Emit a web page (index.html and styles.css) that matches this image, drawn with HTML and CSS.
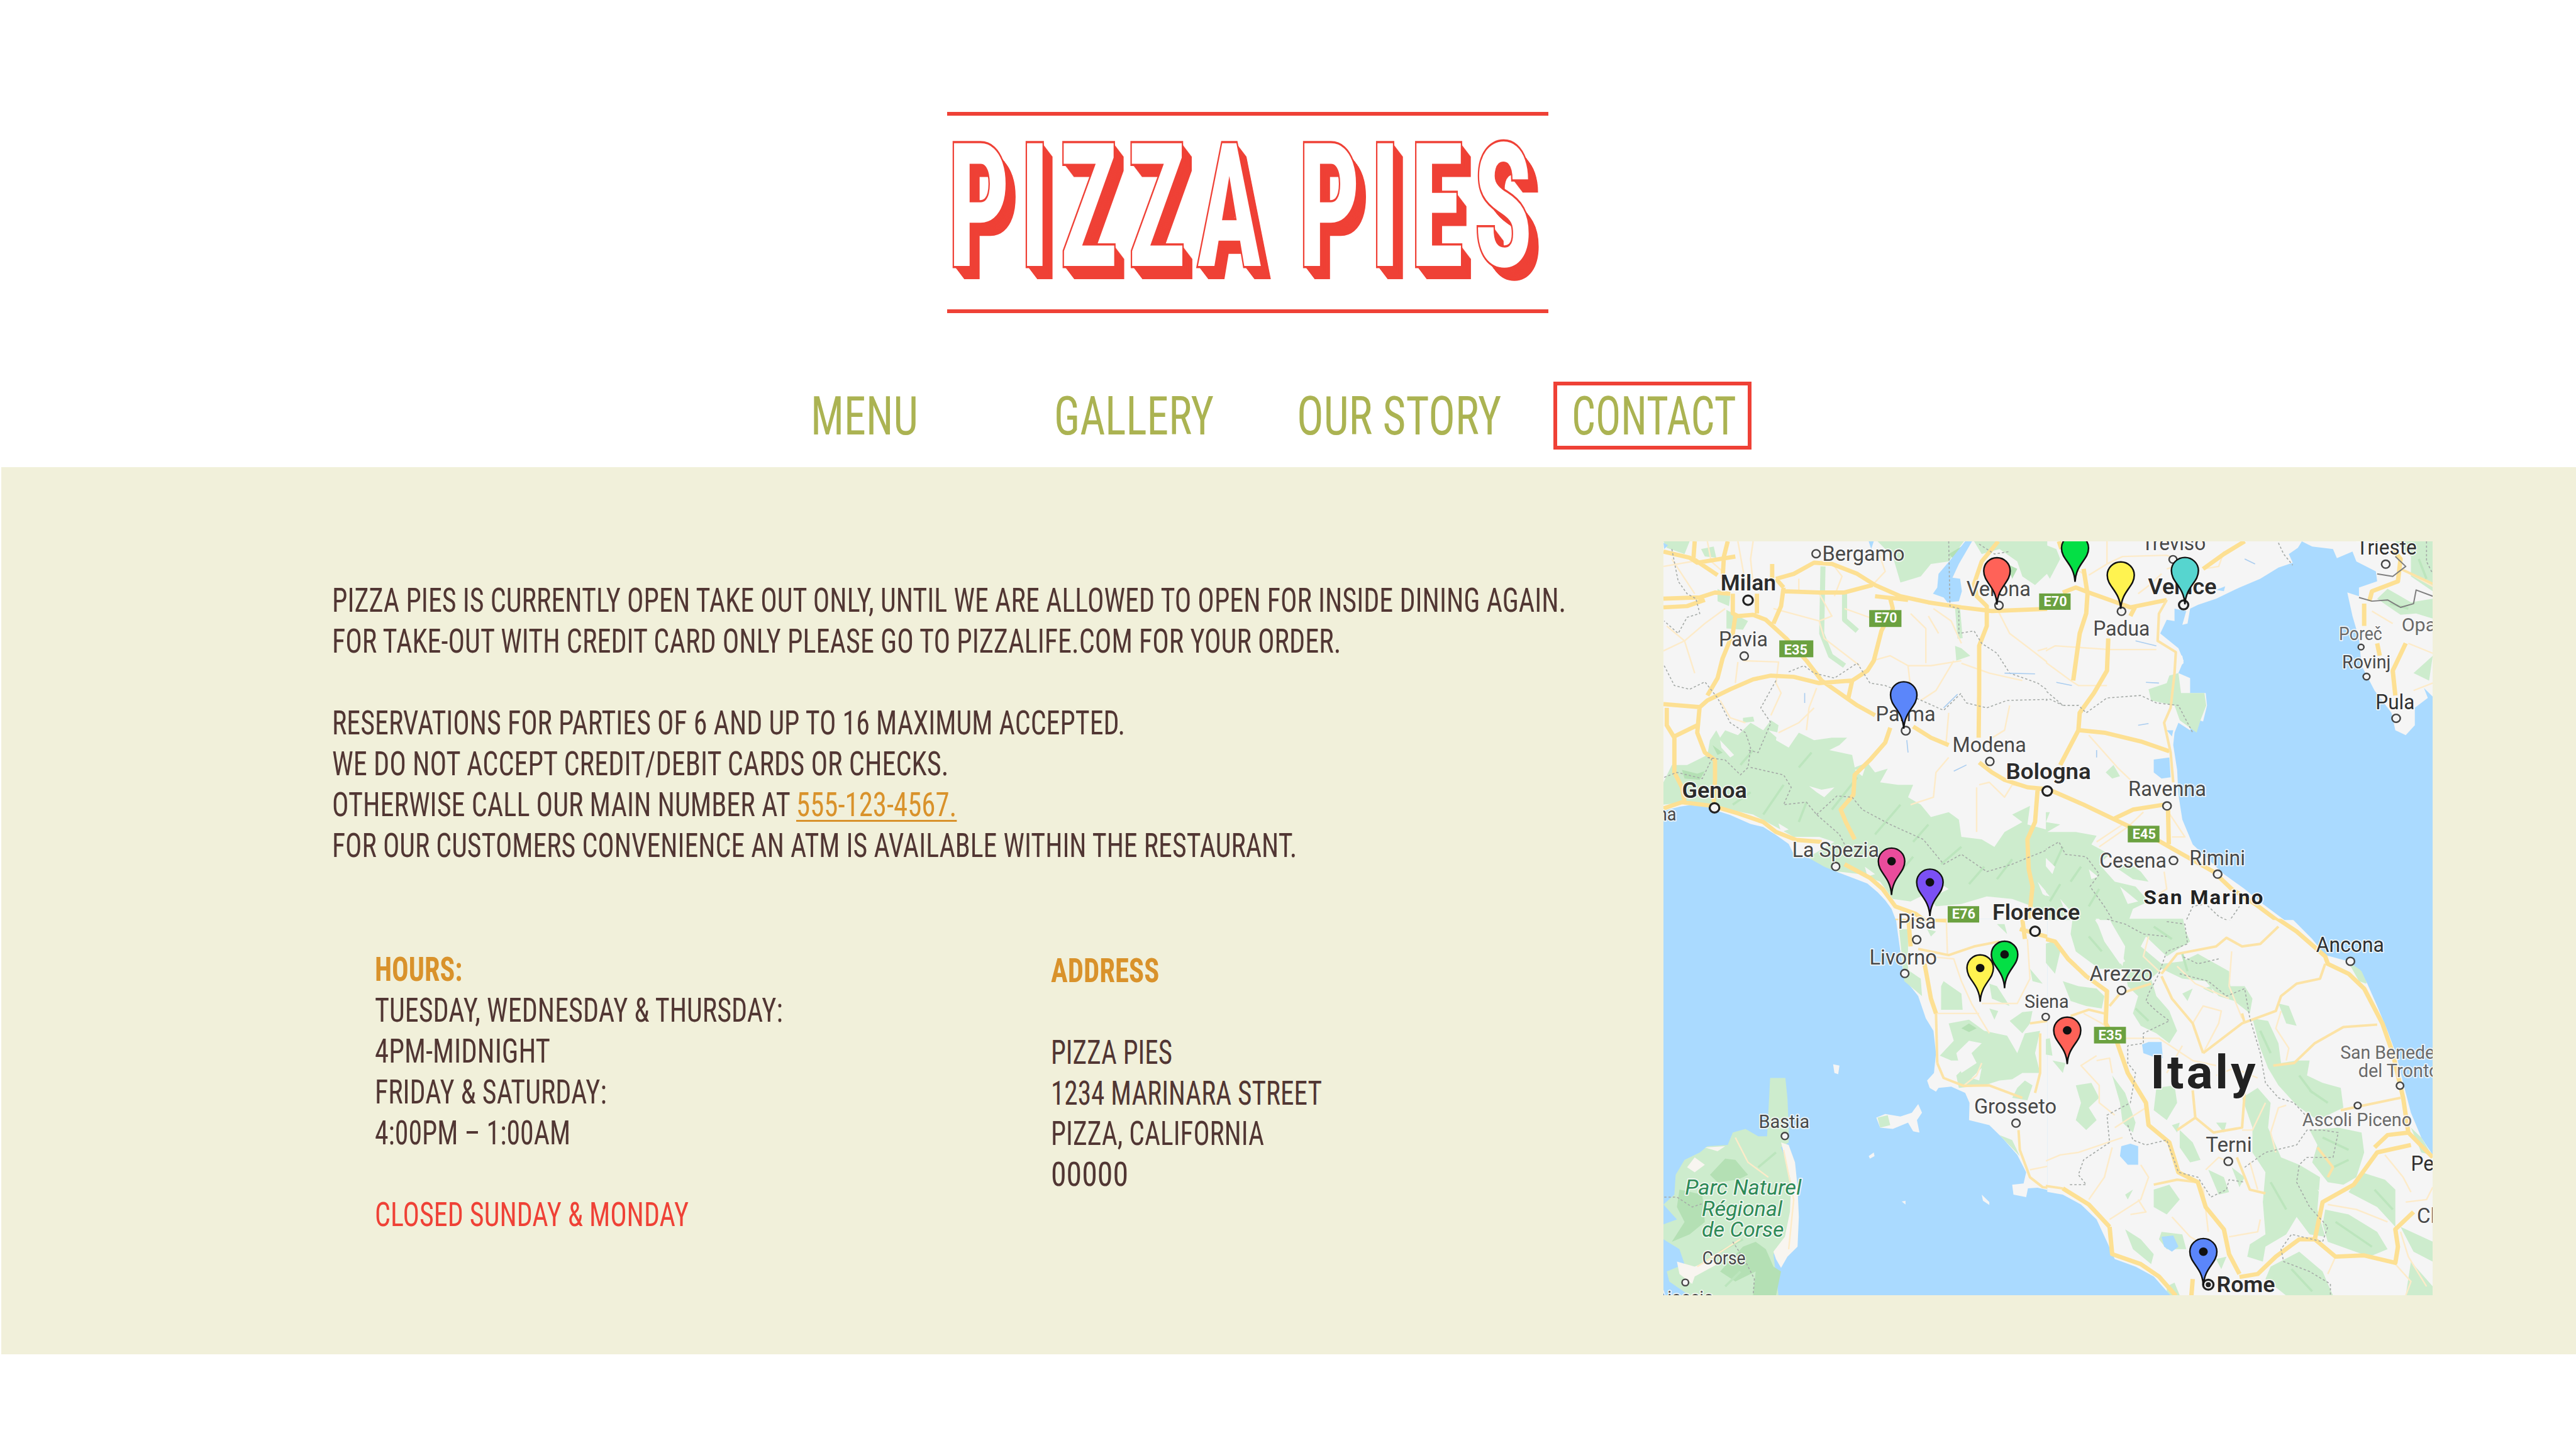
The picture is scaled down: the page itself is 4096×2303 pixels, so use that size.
FILE: index.html
```
<!DOCTYPE html>
<html lang="en">
<head>
    <meta charset="UTF-8">
    <meta name="viewport" content="width=device-width, initial-scale=1.0">
    <title>Pizza Pies - Contact</title>
    <link rel="stylesheet" href="styles.css">
</head>
<body>
    <header>
        <div class="logo"><h1 class="fit" data-width="947">PIZZA PIES</h1></div>
        <nav>
            <a href="#"><span class="fit" data-width="171">MENU</span></a>
            <a href="#"><span class="fit" data-width="254">GALLERY</span></a>
            <a href="#"><span class="fit" data-width="325">OUR STORY</span></a>
            <a href="#" class="active"><span class="fit" data-width="262">CONTACT</span></a>
        </nav>
    </header>

    <main class="contact">
        <div class="info">
            <div class="notice">
                <p><span class="fit" data-width="1962">PIZZA PIES IS CURRENTLY OPEN TAKE OUT ONLY, UNTIL WE ARE ALLOWED TO OPEN FOR INSIDE DINING AGAIN.</span></p>
                <p><span class="fit" data-width="1604">FOR TAKE-OUT WITH CREDIT CARD ONLY PLEASE GO TO PIZZALIFE.COM FOR YOUR ORDER.</span></p>
                <br>
                <p><span class="fit" data-width="1261">RESERVATIONS FOR PARTIES OF 6 AND UP TO 16 MAXIMUM ACCEPTED.</span></p>
                <p><span class="fit" data-width="980">WE DO NOT ACCEPT CREDIT/DEBIT CARDS OR CHECKS.</span></p>
                <p class="phone"><span class="fit" data-width="729">OTHERWISE CALL OUR MAIN NUMBER AT</span><a href="#" class="fit" data-width="255">555-123-4567.</a></p>
                <p><span class="fit" data-width="1534">FOR OUR CUSTOMERS CONVENIENCE AN ATM IS AVAILABLE WITHIN THE RESTAURANT.</span></p>
            </div>
            <div class="details">
                <div class="hours">
                    <h2><span class="fit" data-width="139">HOURS:</span></h2>
                    <p><span class="fit" data-width="649">TUESDAY, WEDNESDAY &amp; THURSDAY:</span></p>
                    <p><span class="fit" data-width="279">4PM-MIDNIGHT</span></p>
                    <p><span class="fit" data-width="369">FRIDAY &amp; SATURDAY:</span></p>
                    <p><span class="fit" data-width="311">4:00PM – 1:00AM</span></p>
                    <br>
                    <p class="closed"><span class="fit" data-width="499">CLOSED SUNDAY &amp; MONDAY</span></p>
                </div>
                <div class="address">
                    <h2><span class="fit" data-width="172">ADDRESS</span></h2>
                    <br>
                    <p><span class="fit" data-width="193">PIZZA PIES</span></p>
                    <p><span class="fit" data-width="431">1234 MARINARA STREET</span></p>
                    <p><span class="fit" data-width="339">PIZZA, CALIFORNIA</span></p>
                    <p><span class="fit" data-width="123">00000</span></p>
                </div>
            </div>
        </div>

        <svg class="map" viewBox="0 0 1700 1667" preserveAspectRatio="none">
            <defs>
                <clipPath id="nw"><rect width="848" height="837"/></clipPath>
                <clipPath id="ne"><rect x="845" width="855" height="837"/></clipPath>
                <clipPath id="sw"><rect y="834" width="848" height="833"/></clipPath>
                <clipPath id="se"><rect x="845" y="834" width="855" height="833"/></clipPath>
                <path id="pin" d="M0,136 C-4,62 -52,48 -52,0 A52,53 0 1 1 52,0 C52,48 4,62 0,136Z"/>
                <g id="dot"><circle r="14" fill="#111"/></g>
            </defs>
            <rect width="1700" height="1667" fill="#f5f5f5"/>

            <!-- north west -->
            <g clip-path="url(#nw)"><g transform="matrix(.5612 0 0 .5485 -15.15 -15.9)">
                <g class="green">
                    <path d="M27,1000 60,930 120,930 200,890 210,830 235,790 250,820 270,790 320,810 370,760 420,790 450,750 480,770 470,830 520,860 560,800 620,830 690,820 750,820 720,850 680,870 770,890 780,940 830,920 860,960 910,945 880,1000 950,1010 1010,1010 990,1060 1040,1090 1080,1140 1150,1120 1190,1150 1200,1220 1280,1230 1330,1260 1370,1200 1440,1160 1400,1130 1470,1095 1460,1170 1568,1200 1568,1568 1480,1500 1400,1470 1300,1460 1200,1490 1100,1500 1060,1450 1000,1480 930,1470 880,1400 800,1370 640,1350 600,1300 700,1240 640,1220 540,1220 470,1180 380,1130 240,1100 120,1080 27,1090Z"/>
                    <path d="M870,29 930,90 960,195 1040,170 1080,120 1150,110 1210,29ZM1250,29 1280,80 1350,60 1420,110 1440,170 1490,205 1568,130 1568,29ZM27,29 130,29 110,80 40,55Z"/>
                    <path d="M240,220 290,250 285,290 240,270ZM275,305 320,330 360,350 340,385 275,380ZM340,740 380,735 385,755 340,760ZM1175,450 1200,460 1235,490 1180,510ZM175,60 225,50 235,95 190,90Z"/>
                    <path class="river" d="M655,130 650,400 685,490 740,530M740,240 740,345 790,390M1185,300 1195,420"/>
                </g>
                <g class="shade">
                    <path d="M100,950 160,965 190,955 170,990 110,985ZM1150,80 1200,50 1180,110ZM1380,120 1420,140 1400,180ZM220,850 260,880 240,890Z"/>
                    <path class="ridge" d="M300,1090 370,1040M420,1130 500,1010M560,1160 590,1080M690,1110 790,980M860,1210 960,1090M1010,1240 1070,1170M1120,1330 1200,1260M1230,1410 1290,1340M1340,1390 1400,1310M960,1360 1010,1300M560,940 610,880M330,930 380,870"/>
                </g>
                <path fill="#f5f5f5" d="M250,830 305,890 290,900 255,860ZM600,1015 650,1030 700,1020 660,1060 630,1040ZM440,790 480,800 490,835ZM780,950 820,945 810,975ZM1120,1410 1150,1430 1110,1450ZM480,1165 520,1190 490,1200ZM820,1340 860,1370 830,1380ZM1500,1400 1568,1480 1520,1450Z"/>
                <g class="water">
                    <path d="M27,1115 90,1098 130,1092 200,1098 230,1112 290,1132 370,1168 420,1180 470,1212 520,1248 540,1290 600,1305 660,1340 720,1365 780,1388 830,1408 870,1443 900,1475 925,1510 940,1550 945,1568 27,1568Z"/>
                    <path d="M1215,29 1160,100 1110,160 1105,215 1088,240 1130,255 1145,275 1190,270 1202,230 1195,180 1165,175 1190,120 1242,29ZM835,29 855,29 845,60ZM27,35 45,45 30,60Z"/>
                </g>
                <g class="minor">
                    <path d="M27,130 140,110 M200,29 215,110 260,150M320,29 350,200M380,29 370,100 380,200M60,100 150,240 M27,470 110,430 190,360 270,300M110,430 150,560M110,430 40,370M340,510 480,515 470,600 490,640 450,730M320,515 310,600M640,240 690,330 640,350 460,300M640,350 660,420 800,530M850,510 920,490 990,530 1080,530 1200,510M1000,320 1060,380 1060,520M1200,440 1160,350 1090,300M1345,310 1390,400 1480,470 1568,540M1500,470 1568,450M990,530 1000,620M1170,510 1100,630 1040,670M630,620 600,700 590,790M620,700 560,760 480,800M1150,720 1140,840M1390,690 1370,790 1290,840M250,670 290,740 350,760M1150,900 1100,960 1090,1060 1000,1090M1270,1010 1310,1000 1370,1060 1400,1010 1450,1020M1260,1020 1260,1200M700,250 730,170 700,130M560,230 560,180M850,205 900,150 870,60M1110,400 1070,330M740,300 850,340M1200,520 1310,560 1440,590"/>
                </g>
                <g class="major">
                    <path d="M27,260 170,255 230,235 290,240M150,29 145,100 240,165M280,29 265,90 260,180M27,70 130,95 160,115 310,90M470,180 540,160 620,115 690,120 790,160 860,205 960,250 1070,275 1200,295 1320,310 1568,300M500,230 640,235 740,235 850,205M500,215 490,290 460,360M470,180 500,215M300,240 300,320 320,330 380,325 430,345 510,420 590,510 650,590 720,640 790,690 860,730M395,240 395,320M920,260 930,300 885,390 855,510 830,550 770,590 640,600 540,575 450,570 380,585 290,625 200,670 170,697 27,685M770,590 755,660M310,330 300,400 260,500 240,580 200,650M170,690 160,800 190,880 230,910 230,990 225,1080M40,700 40,770 70,820 70,960 100,1020 110,1080M70,815 160,770M27,1105 100,1080 220,1095 320,1125 420,1160 470,1200 550,1232 650,1240M1010,775 1080,820 1150,850M920,780 900,840 840,910 780,970 775,1050 725,1110 745,1160 780,1230M1270,920 1320,960 1370,990 1460,1020 1568,1030M1345,29 1280,110 1250,200 1260,250 1300,290 1300,370 1270,450 1270,640 1268,820M740,1330 840,1385 890,1430 940,1500 1020,1530 1070,1568M1500,1030 1490,1160 1460,1230 1465,1350 1480,1420 1465,1568M860,250 990,265M455,120 455,180M27,295 120,290 190,265"/>
                </g>
                <path class="border" d="M60,60 85,190 120,240 155,260 170,320 120,335 85,400 30,350M30,530 70,610 130,625 190,595 240,660 290,760 350,800 370,860 360,940 330,970 270,910 200,900M470,590 410,700 450,760 400,880 360,870M370,940 500,970 530,1020 500,1090 590,1080 630,1130 720,1210 740,1250M630,1130 710,1055 770,1060 810,1110 920,1170 1050,1230 1130,1330 1200,1290 1300,1360 1400,1330 1470,1300 1568,1260M520,555 580,530 620,560 700,580 790,520 840,600 900,610 1020,660 1130,710 1200,640M1150,29 1155,290 1190,300 1190,400 1250,390 1280,440 1340,480 1390,560 1500,600 1568,650M1200,650 1220,680 1300,700 1380,670 1568,665M1270,40 1330,80 1390,70M30,980 80,960 180,985 220,900"/>
                <path class="stream" d="M1370,560 1490,563M1130,700 1185,645M583,640 583,680M985,830 990,880M1170,955 1220,930"/>
            </g></g>

            <!-- north east -->
            <g clip-path="url(#ne)"><g transform="matrix(.574 0 0 .5485 825 -15.9)">
                <g class="green">
                    <path d="M0,29 75,60 90,100 50,180 0,90ZM1380,29 1524,29 1524,230 1440,170 1440,90ZM1350,220 1440,275 1524,260 1524,340 1460,320 1400,325 1310,260ZM1450,560 1524,490 1510,590ZM265,960 295,930 320,975 290,985Z"/>
                    <path d="M0,1120 50,1120 35,1160 90,1170 40,1200 150,1200 230,1215 210,1250 280,1290 240,1330 300,1400 380,1420 430,1480 370,1510 350,1568 0,1568ZM300,1340 360,1330 400,1360 430,1400 370,1390Z"/>
                </g>
                <path class="shade ridge" d="M60,1350 100,1260M130,1400 170,1340M200,1500 240,1430M50,1480 90,1410M1470,100 1500,180M1360,280 1430,300"/>
                <path fill="#f5f5f5" d="M20,1290 70,1340 60,1370 20,1320ZM90,1470 140,1530 120,1550ZM0,1400 50,1460 10,1450ZM320,1420 390,1480 350,1490ZM200,1350 235,1380 210,1390Z"/>
                <g class="water">
                    <path d="M1020,29 1005,55 970,80 985,115 930,135 860,180 780,215 690,260 620,285 590,300 580,360 560,365 575,310 530,300 530,350 500,345 475,400 510,430 545,460 565,510 545,560 590,580 590,640 650,640 655,690 640,755 625,750 625,710 605,720 590,790 545,760 530,800 525,850 540,950 545,1050 560,1150 600,1250 650,1300 720,1370 800,1430 870,1490 970,1568 1568,1568 1568,655 1524,655 1490,620 1505,660 1455,700 1455,770 1420,810 1380,790 1365,720 1300,630 1250,530 1240,420 1215,330 1195,235 1240,250 1240,215 1310,190 1305,150 1230,110 1215,70 1155,97 1140,60 1060,50Z"/>
                    <path d="M450,908 510,900 515,980 480,985 450,960ZM500,790 525,790 520,815ZM690,225 725,210 720,230Z"/>
                </g>
                <path class="green" d="M430,625 500,600 510,570 545,560 555,640 645,640 652,690 630,750 615,800 550,750 530,690 440,670Z"/>
                <path fill="#f5f5f5" d="M535,480 560,490 565,520 540,540Z"/>
                <path class="minor" d="M0,490 70,450 280,465 460,465M0,490 130,590 160,610 270,610M200,165 270,120 330,90 500,85 530,100M270,29 270,120M390,240 440,200 480,160M200,810 310,940 360,990M500,1110 570,1220 520,1220M410,1120 350,1180 240,1260M490,1360 500,1430 420,1480M640,140 700,130 720,70M1290,310 1370,360M1420,150 1524,210M1524,600 1450,630M1430,440 1524,480M330,1170 230,1240M100,29 120,120 180,160M500,140 560,120"/>
                <path class="major" d="M180,140 195,240 190,320 165,400 140,590M100,235 150,215 200,235 280,265 360,295 500,265M275,420 270,550 220,640 165,720 160,790 120,870 90,930M165,790 260,800 400,835 510,875M0,1010 60,1035 180,1090 300,1150 460,1230 560,1290 680,1360 750,1430 840,1490 940,1568M300,1145 370,1110 490,1090M505,1110 508,1250M640,140 720,80 800,29M1280,270 1290,230 1390,190 1400,100 1370,60M1260,280 1260,370M1310,440 1320,490M1420,440 1370,550 1380,650M0,1170 5,1040M85,29 95,60M380,290 360,330"/>
                <path class="road-thin" d="M500,265 470,320 465,430 535,475 530,560 515,700 490,760 515,880 525,1000M1400,140 1524,200"/>
                <path class="frontier" d="M1240,255 1290,270 1350,265 1400,295 1450,280 1460,225 1524,250M1310,160 1370,170 1420,130 1380,90"/>
                <path class="border" d="M0,600 100,690 160,690 190,720 270,660 400,650 460,680 545,690 600,800M0,680 50,665 100,690M0,1290 85,1240 110,1290 190,1300 240,1370 205,1420 260,1500 300,1568M930,35 950,80 985,125M1500,29 1500,110 1524,160M570,1568 600,1500 650,1490 700,1540 740,1560 780,1500"/>
                <path class="stream" d="M420,597 470,600M75,597 135,610M390,770 430,763M230,870 230,900M380,430 460,450M800,100 840,120"/>
            </g></g>

            <!-- south west -->
            <g clip-path="url(#sw)"><g transform="matrix(.5612 0 0 .5485 -15.15 824)">
                <rect class="water" width="1568" height="1568"/>
                <path fill="#f5f5f5" d="M940,0 950,80 975,260 1030,330 1060,420 1090,470 1100,560 1092,640 1065,670 1075,700 1100,715 1110,700 1160,695 1215,720 1232,760 1230,830 1310,850 1360,900 1420,970 1455,1040 1445,1085 1400,1090 1405,1130 1455,1140 1462,1105 1500,1102 1568,1118 1568,0ZM695,605 720,610 715,645 700,640ZM835,975 855,960 858,975 840,985ZM1280,1130 1310,1160 1310,1172 1285,1155ZM965,1158 980,1155 980,1170ZM865,820 900,805 960,815 1005,800 1030,765 1045,800 1025,830 1035,880 1010,875 990,840 930,865 880,860Z"/>
                <path class="green" d="M447,660 507,660 515,740 520,850 520,920 490,940 530,1050 540,1150 520,1260 500,1330 460,1370 480,1537 130,1537 50,1480 40,1440 110,1410 90,1350 27,1310 27,1250 80,1230 27,1170 70,1130 75,1050 110,990 170,960 200,935 280,930 300,880 350,865 400,895 435,895 440,800Z"/>
                <path fill="#f8f5f0" d="M490,920 520,930 545,1000 555,1100 560,1220 555,1340 515,1380 490,1425 470,1390 460,1360 505,1300 525,1200 530,1080ZM150,980 190,1010 150,1040 120,1020ZM80,1400 150,1420 220,1390 240,1410 150,1460 140,1490 90,1450ZM190,940 270,935 240,955Z"/>
                <g class="green">
                    <path d="M955,60 990,60 990,225 1040,260 1045,330 975,270ZM1130,270 1200,320 1205,385 1120,385 1120,290ZM1150,440 1230,425 1290,470 1380,490 1420,560 1450,480 1510,470 1490,560 1510,640 1440,640 1400,665 1350,670 1290,690 1190,700 1180,650 1240,590 1160,590 1115,570 1170,510ZM1400,740 1420,700 1450,670 1480,690 1460,750ZM1390,430 1440,395 1480,390 1470,440 1440,480ZM1310,380 1345,390 1330,425ZM1540,200 1568,120 1568,280ZM1310,280 1340,290 1390,370 1320,340ZM1350,890 1400,910 1430,975ZM870,820 910,810 920,850 880,860ZM1065,60 1100,70 1080,90ZM1340,40 1370,40 1380,80ZM1470,220 1520,280 1480,270Z"/>
                </g>
                <path fill="#f5f5f5" d="M1180,560 1230,510 1280,520 1240,560 1260,600 1200,640ZM1240,660 1280,620 1270,670Z"/>
                <g class="shade">
                    <path d="M210,1050 270,985 310,990 360,1050 320,1070 240,1080ZM340,1340 390,1320 430,1350 460,1420 490,1440 470,1537 380,1537 390,1440 310,1480 250,1440ZM90,1110 180,1130 190,1240 130,1290 60,1320 110,1240 80,1180ZM1200,460 1230,440 1260,460 1230,475Z"/>
                </g>
                <path class="shade ridge" d="M400,1020 470,960M250,1360 340,1310M270,1500 330,1440"/>
                <path class="minor" d="M1060,170 1170,180 1200,270 1240,360 1280,430 1310,480M1140,0 1145,160M1100,400 1270,400M1280,360 1420,360 1470,260 1460,100M1210,690 1260,650 1280,600M1470,1030 1568,1010M310,900 360,1000 440,1060M500,950 540,1150 520,1350M330,1310 160,1420"/>
                <path class="road-thin" d="M1030,140 1150,165 1250,130 1350,110M1105,600 1130,660 1210,692 1310,690 1440,740M1510,480 1510,640 1490,720M1425,870 1430,950 1470,1060 1520,1100 1568,1105M1470,440 1540,430"/>
                <path class="major" d="M1055,200 1080,340 1100,400M990,0 1000,130M1430,60 1568,100M1440,20 1450,100M940,15 1140,25"/>
                <path class="road-thin" d="M1100,400 1105,600"/>
                <path class="border" d="M30,1140 80,1140 140,1180 200,1160M300,1320 350,1400 385,1470 380,1537"/>
            </g></g>

            <!-- south east -->
            <g clip-path="url(#se)"><g transform="matrix(.574 0 0 .5485 825 824)">
                <g class="green">
                    <path d="M140,0 210,0 240,50 300,160 330,210 340,130 290,40 270,0 560,0 570,60 590,110 500,170 440,110 420,90 400,130 480,200 560,190 620,160 740,230 745,290 800,290 830,340 820,400 760,350 700,330 650,270 560,260 480,220 440,260 460,330 510,390 540,470 510,520 460,480 400,450 370,400 390,330 350,290 340,220 240,220 150,150 130,80ZM0,130 60,110 90,150 70,240 30,190ZM100,270 160,290 230,300 260,330 250,380 190,370 130,350ZM830,420 890,430 930,520 940,600 1000,590 1050,590 1040,650 1100,680 1170,700 1180,780 1080,830 1000,770 930,690 890,620 860,540ZM930,360 970,370 1000,450 960,440Z"/>
                    <path d="M150,690 210,680 240,740 200,780 230,830 190,870 150,830 170,760ZM290,650 340,720 380,840 370,880 330,840 320,760ZM460,700 530,690 540,760 500,830 450,790ZM550,870 600,920 630,990 590,1000 550,940ZM790,740 850,700 900,760 890,860 940,980 1010,1010 1090,1060 1080,1190 1110,1300 1050,1290 1000,1220 960,1290 880,1340 870,1400 810,1380 820,1330 880,1290 870,1160 880,1040 830,960 830,860ZM1050,870 1160,860 1250,880 1260,960 1230,1060 1180,1090 1120,1080 1060,1000 1080,930ZM1250,1040 1340,1070 1380,1110 1380,1260 1310,1180 1200,1120ZM1110,1190 1200,1210 1310,1280 1350,1350 1280,1380 1120,1320 1100,1250ZM660,1030 720,1060 740,1120 700,1130ZM750,1020 800,1060 780,1100ZM450,1110 510,1090 550,1150 500,1210 450,1180ZM480,1280 560,1290 575,1350 500,1350 470,1310ZM340,1270 400,1310 450,1370 440,1410 370,1350ZM690,1390 730,1380 710,1430ZM900,1420 1010,1360 1100,1440 1140,1537 960,1537 880,1470ZM1400,1260 1524,1320 1524,1400 1450,1360ZM1440,1400 1524,1500 1524,1537 1420,1537ZM0,510 50,500 60,570 0,560ZM340,1130 370,1110 350,1150ZM520,850 550,840 540,880ZM60,590 110,600 100,640ZM1200,200 1260,220 1270,280ZM690,840 730,840 720,880ZM500,1500 530,1490 550,1537 500,1537Z"/>
                    <path d="M560,320 600,300 580,350ZM640,300 670,290 680,320ZM1440,860 1480,900 1520,970 1480,960ZM570,0 640,0 600,10Z"/>
                </g>
                <path fill="#f5f5f5" d="M220,0 260,40 340,190 320,200 260,110ZM1080,1110 1160,1150 1120,1170ZM520,560 560,610 520,610Z"/>
                <path class="shade ridge" d="M380,380 430,430M560,160 580,230M860,470 900,560M1050,710 1120,760M1100,900 1200,950M1140,1020 1200,990M1150,1240 1290,1340M1300,1110 1370,1190M900,1080 960,1190M980,1430 1060,1520M200,90 250,150M1010,650 1060,720M450,50 520,100"/>
                <g class="water">
                    <path d="M965,0 1060,100 1110,165 1200,190 1250,230 1272,280 1310,370 1350,470 1382,560 1410,680 1440,800 1480,900 1524,970 1568,970 1568,0ZM0,1112 100,1130 170,1170 230,1230 270,1320 300,1390 380,1420 450,1460 515,1537 0,1537Z"/>
                    <path d="M405,525 430,515 480,515 485,580 450,575 410,560ZM325,935 360,925 390,935 390,1010 350,1010 320,975ZM480,1300 525,1295 545,1340 520,1360 490,1340Z"/>
                </g>
                <path class="green" d="M1200,195 1245,225 1268,280 1240,270ZM500,1500 530,1485 550,1537 515,1537Z"/>
                <path class="minor" d="M230,570 170,610 240,690 240,760 300,810M230,590 280,580 290,640M0,1010 90,970 160,960 330,900M290,940 260,1060 200,1150M400,1010 430,1060 400,1150 280,1230M340,500 470,500 600,590 690,610M600,440 640,370 710,390 700,440 640,560M560,530 500,640M860,1230 850,1280 740,1300M650,1030 700,980 740,1000M940,390 920,460 970,540 960,590M640,1100 660,1280M520,1220 590,1300 640,1330M1420,1160 1500,1150 1524,1100M1340,970 1410,1060 1440,1120M1120,1170 1230,1190 1350,1240M750,150 740,290 790,420M920,960 900,880 930,780 960,770M1400,1280 1430,1380 1500,1500M1380,1410 1440,1480 1420,1537M1150,1380 1120,1450M420,780 300,860M820,1000 850,1110M390,1150 420,1200 360,1210M880,760 830,870 790,870M540,210 610,280 740,340M430,90 410,170 480,240M320,500 250,440 180,400M850,660 760,620 690,650"/>
                <path class="road-thin" d="M480,240 540,160 690,130 730,95 790,130 860,120 930,50M640,560 790,440 920,390 940,330 1000,280 1090,260 1110,200M910,610 990,600 1070,520 1180,455 1310,445M480,250 520,340 600,440 640,560M770,980 820,1110 880,1125M600,710 610,820 680,880 790,860 800,720M280,370 320,320 440,280M130,410 200,385 260,400M30,430 15,500 10,640 0,720M450,1090 540,1070 620,1080M1170,790 1400,740M800,440 790,400M610,820 540,870M1080,940 1140,1020 1120,1060M0,1090 100,1105"/>
                <path class="major" d="M0,90 70,110 120,180 190,250 270,310 265,440 310,520 350,640 420,760 430,850 510,920 545,1040 620,1080 650,1180 720,1270 740,1370 780,1450M780,1462 850,1450 920,1380 1010,1310 1070,1310 1150,1380 1260,1375 1380,1405 1390,1340 1380,1270 1450,1200M1070,1310 1100,1160 1220,1090 1310,960 1440,930M900,0 1000,70 1110,170 1120,200 1200,240 1260,300 1330,440 1370,560 1410,740 1430,880 1524,980M1300,940 1350,890 1430,880M280,1260 290,1370 400,1410 470,1460 535,1537M595,1537 600,1470M100,1105 200,1170 280,1260"/>
                <path class="border" d="M270,20 340,40 410,80 500,90M500,30 570,40 580,120 500,150 470,240 430,320 420,350 460,390 510,430 410,480 410,520 350,530 350,600 380,640 360,760 270,810 280,920 180,990 160,1050 190,1090 120,1090M350,850 370,910 420,930 500,910 545,1040 620,1060 670,1140 730,1110 740,1070 800,1080 M800,1020 880,960 1000,930 1040,870 1100,870 1160,880 1140,980 1040,980 1010,1010 1000,1080 1050,1180 1120,1260 1100,1320 980,1290 940,1350 950,1400 1050,1440 1130,1490 1130,1537M550,240 660,270 730,330 800,300 820,420 860,560 880,680 930,740 990,760 1060,840M700,180 620,200 560,170"/>
            </g></g>

            <!-- labels -->
            <g class="labels" transform="matrix(.5612 0 0 .5485 -15.15 -15.9)">
                <g class="town"><circle cx="628" cy="79" r="16"/><circle cx="345" cy="491" r="16"/><circle cx="1348" cy="287" r="16"/><circle cx="981" cy="792" r="17"/><circle cx="1312" cy="916" r="16"/><circle cx="705" cy="1339" r="16"/></g>
                <g class="town big"><circle cx="360" cy="266" r="19"/><circle cx="228" cy="1103" r="19"/><circle cx="1538" cy="1035" r="19"/></g>
                <text class="city" x="252" y="226" textLength="218">Milan</text>
                <text x="652" y="107" textLength="325">Bergamo</text>
                <text x="245" y="453" textLength="193">Pavia</text>
                <text x="1220" y="249" textLength="253">Verona</text>
                <text x="863" y="753" textLength="235">Parma</text>
                <text x="1165" y="878" textLength="290">Modena</text>
                <text class="city" x="100" y="1063" textLength="256">Genoa</text>
                <text x="534" y="1302" textLength="342">La Spezia</text>
                <text x="950" y="1590" textLength="150">Pisa</text>
                <text class="small" x="4" y="1155" textLength="74">na</text>
                <text class="city" x="1375" y="987" textLength="335">Bologna</text>
                <g class="shield"><rect x="837" y="306" width="127" height="68"/><text x="857" y="357" textLength="90">E70</text><rect x="483" y="428" width="134" height="68"/><text x="502" y="484" textLength="92">E35</text><rect x="1506" y="239" width="124" height="66"/><text x="1524" y="290" textLength="92">E70</text><rect x="1146" y="1499" width="124" height="66"/><text x="1163" y="1550" textLength="92">E76</text></g>
                <text class="city" x="1322" y="1553" textLength="345">Florence</text>
            </g>
            <g class="labels" transform="matrix(.574 0 0 .5485 825 -15.9)">
                <g class="town"><circle cx="524" cy="102" r="15"/><circle cx="326" cy="311" r="16"/><circle cx="1343" cy="121" r="16"/><circle cx="1248" cy="455" r="11"/><circle cx="1269" cy="574" r="13"/><circle cx="1383" cy="742" r="16"/><circle cx="501" cy="1095" r="16"/><circle cx="526" cy="1315" r="16"/><circle cx="696" cy="1370" r="16"/></g>
                <g class="town big"><circle cx="565" cy="285" r="18"/></g>
                <text x="403" y="65" textLength="247">Treviso</text>
                <text class="city" x="428" y="243" textLength="264">Venice</text>
                <text x="217" y="408" textLength="218">Padua</text>
                <text class="mid" x="1230" y="82" textLength="232">Trieste</text>
                <text class="small grey" x="1163" y="427" textLength="166">Poreč</text>
                <text class="small grey" x="1404" y="392" textLength="232">Opatija</text>
                <text class="small" x="1175" y="542" textLength="187">Rovinj</text>
                <text class="mid" x="1304" y="705" textLength="150">Pula</text>
                <text x="352" y="1055" textLength="300">Ravenna</text>
                <text x="241" y="1345" textLength="258">Cesena</text>
                <text x="587" y="1333" textLength="215">Rimini</text>
                <text class="state" x="411" y="1492" textLength="460">San Marino</text>
                <g class="shield"><rect x="350" y="1175" width="122" height="67"/><text x="368" y="1228" textLength="90">E45</text></g>
            </g>
            <g class="labels" transform="matrix(.5612 0 0 .5485 -15.15 824)">
                <g class="town"><circle cx="1024" cy="103" r="16"/><circle cx="977" cy="239" r="16"/><circle cx="1532" cy="414" r="14"/><circle cx="1415" cy="842" r="16"/><circle cx="505" cy="894" r="14"/><circle cx="113" cy="1484" r="13"/></g>
                <g class="town big"><circle cx="1490" cy="69" r="19"/></g>
                <text x="838" y="202" textLength="266">Livorno</text>
                <text class="small" x="1448" y="378" textLength="175">Siena</text>
                <text x="1250" y="803" textLength="325">Grosseto</text>
                <text class="small" x="402" y="861" textLength="200">Bastia</text>
                <text class="park" x="112" y="1130" textLength="458">Parc Naturel</text>
                <text class="park" x="178" y="1216" textLength="317">Régional</text>
                <text class="park" x="178" y="1301" textLength="323">de Corse</text>
                <text class="small" x="180" y="1412" textLength="170">Corse</text>
                <text class="small" x="-2" y="1571" textLength="227">Ajaccio</text>
            </g>
            <g class="labels" transform="matrix(.574 0 0 .5485 825 824)">
                <g class="town"><circle cx="326" cy="307" r="16"/><circle cx="1207" cy="190" r="16"/><circle cx="1398" cy="691" r="14"/><circle cx="1235" cy="771" r="13"/><circle cx="737" cy="996" r="16"/></g>
                <g class="town big"><circle cx="660" cy="1493" r="20"/></g>
                <circle cx="660" cy="1493" r="10" fill="#222"/>
                <text x="203" y="268" textLength="243">Arezzo</text>
                <text class="mid" x="1075" y="152" textLength="262">Ancona</text>
                <text class="small grey" x="1168" y="584" textLength="447">San Benedetto</text>
                <text class="small grey" x="1237" y="657" textLength="312">del Tronto</text>
                <text class="small grey" x="1022" y="854" textLength="422">Ascoli Piceno</text>
                <text x="650" y="958" textLength="178">Terni</text>
                <text class="mid" x="1440" y="1035" textLength="275">Pescara</text>
                <text x="1463" y="1243" textLength="205">Chieti</text>
                <text class="city" x="692" y="1522" textLength="225">Rome</text>
                <text class="country" x="437" y="703" textLength="405">Italy</text>
                <g class="shield"><rect x="220" y="454" width="123" height="67"/><text x="237" y="506" textLength="92">E35</text></g>
            </g>

            <!-- pins -->
            <g class="pins">
                <g transform="matrix(.5612 0 0 .5485 -15.15 -15.9)">
                    <use href="#pin" x="1340" y="148" fill="#ff6258"/>
                    <use href="#pin" x="973" y="648" fill="#5b86fa"/>
                    <use href="#pin" x="925" y="1318" fill="#ea4c9c"/><use href="#dot" x="925" y="1318"/>
                    <use href="#pin" x="1076" y="1403" fill="#7b50f5"/><use href="#dot" x="1076" y="1403"/>
                </g>
                <g transform="matrix(.574 0 0 .5485 825 -15.9)">
                    <use href="#pin" x="147" y="56" fill="#04df45"/>
                    <use href="#pin" x="323" y="165" fill="#fff350"/>
                    <use href="#pin" x="570" y="147" fill="#56d5cf"/>
                </g>
                <g transform="matrix(.5612 0 0 .5485 -15.15 824)">
                    <use href="#pin" x="1274" y="217" fill="#fff350"/><use href="#dot" x="1274" y="217"/>
                    <use href="#pin" x="1370" y="162" fill="#04df45"/><use href="#dot" x="1370" y="162"/>
                </g>
                <g transform="matrix(.574 0 0 .5485 825 824)">
                    <use href="#pin" x="117" y="468" fill="#ff6258"/><use href="#dot" x="117" y="468"/>
                    <use href="#pin" x="641" y="1360" fill="#5b86fa"/><use href="#dot" x="641" y="1360"/>
                </g>
            </g>
        </svg>
    </main>

    <script src="fit.js"></script>
</body>
</html>
```
FILE: styles.css
```
* {
    margin: 0;
    padding: 0;
    box-sizing: border-box;
}

body {
    background: white;
    color: #513633;
    font-family: Roboto, sans-serif;
    font-stretch: 75%;
    overflow: hidden;
}

a {
    text-decoration: none;
}

.fit {
    display: inline-block;
    transform-origin: left;
    white-space: nowrap;
}

header {
    height: 743.4px;
    padding-top: 177.7px;
}

.logo {
    width: 956px;
    height: 320px;
    margin-left: 1505.8px;
    padding-left: 1px;
    border-top: 6px solid #ef4136;
    border-bottom: 6px solid #ef4136;
}

h1 {
    font-size: 274.6px;
    line-height: 322px;
    font-weight: 700;
    letter-spacing: 26px;
    word-spacing: -24px;
    margin-top: -16px;
    color: white;
    -webkit-text-stroke: 7px #ef4136;
    paint-order: stroke fill;
    text-shadow: 1.2px 1px #ef4136, 2.4px 2px #ef4136, 3.6px 3px #ef4136, 4.8px 4px #ef4136, 6px 5px #ef4136,
        7.2px 6px #ef4136, 8.4px 7px #ef4136, 9.6px 8px #ef4136, 10.8px 9px #ef4136, 12px 10px #ef4136,
        13.2px 11px #ef4136, 14.4px 12px #ef4136, 15.6px 13px #ef4136, 16.8px 14px #ef4136, 18px 15px #ef4136,
        19.2px 16px #ef4136, 20.4px 17px #ef4136, 21.6px 18px #ef4136, 22.8px 19px #ef4136, 24px 20px #ef4136,
        25.2px 21px #ef4136;
}

nav {
    display: grid;
    grid-template-columns: 387.4px 385.3px 403.8px 314.5px;
    margin-top: 108.9px;
    padding-left: 1289px;
}

nav a {
    height: 108.5px;
    padding-top: 6px;
    font-size: 85px;
    line-height: 99.7px;
    color: #abb352;
}

nav a.active {
    margin-left: 5px;
    width: 314.5px;
    padding: 0 0 0 23px;
    border: 6px solid #ef4136;
}

.contact {
    display: flex;
    height: 1411px;
    margin-left: 2px;
    background: #f1f0da;
    font-size: 53.1px;
    line-height: 64.9px;
}

.info {
    width: 2642.6px;
    padding: 180px 0 0 526px;
}

.phone {
    display: flex;
    gap: 9px;
}

.phone a {
    color: #d9922b;
    text-decoration: underline;
    text-decoration-thickness: 3px;
    text-underline-offset: 6px;
}

.details {
    display: flex;
    margin-top: 132.7px;
    padding-left: 67.5px;
}

.hours {
    width: 1075.5px;
}

.address {
    padding-top: 1.4px;
}

h2 {
    font-size: 53.1px;
    font-weight: 700;
    color: #d9922b;
}

.closed {
    color: #ef4136;
}

/* map */
.map {
    width: 1223.4px;
    height: 1199.6px;
    margin-top: 117.3px;
    font-stretch: 100%;
}

.green { fill: #cdeccd; }
.shade { fill: #b4e0b4; }
.water { fill: #aadaff; }

.river, .ridge, .minor, .major, .road-thin, .border, .frontier, .stream, .minor path, .major path {
    fill: none;
    stroke-linejoin: round;
}

.river { stroke: #cdeccd; stroke-width: 20; }
.ridge { stroke: #bce5bd; stroke-width: 9; }
.minor { stroke: #fdebc9; stroke-width: 6; }
.road-thin { stroke: #fce3a6; stroke-width: 10; }
.major { stroke: #fde093; stroke-width: 17; }
.stream { stroke: #aacdf0; stroke-width: 4; }
.frontier { stroke: #7f7f7f; stroke-width: 5; }

.border {
    stroke: #a5aaa7;
    stroke-width: 4;
    stroke-dasharray: 9 8;
}

.town circle {
    fill: #f5f5f5;
    stroke: #454545;
    stroke-width: 6;
}

.town.big circle {
    stroke: #222;
    stroke-width: 8;
}

.labels text {
    font-family: Roboto, sans-serif;
    font-size: 83px;
    fill: #484848;
    stroke: rgba(250, 250, 250, .85);
    stroke-width: 9px;
    stroke-linejoin: round;
    paint-order: stroke fill;
}

.labels .city {
    font-size: 90px;
    font-weight: 600;
    fill: #2b2b2b;
}

.labels .mid { fill: #2f2f2f; }
.labels .small { font-size: 74px; }
.labels .grey { fill: #6a6a6a; }
.labels .state { font-size: 80px; font-weight: 700; fill: #222; }
.labels .park { font-size: 86px; font-style: italic; fill: #2e8a57; }

.labels .country {
    font-size: 190px;
    font-weight: 700;
    fill: #222;
}

.shield rect { fill: #6ba140; }

.labels .shield text {
    font-size: 54px;
    font-weight: 700;
    fill: white;
    stroke: none;
}

.pins use {
    stroke: #111;
    stroke-width: 6;
}
```
FILE: fit.js
```
// squeeze each line of the condensed face to its set width
document.querySelectorAll(".fit").forEach(el => {
    const target = Number(el.dataset.width);
    const natural = el.offsetWidth;
    el.style.transform = `scaleX(${target / natural})`;
    el.style.marginRight = `${target - natural}px`;
});

// town names scale to their length, country names stay letter-spaced
document.querySelectorAll(".labels text:not(.state):not(.country)").forEach(label => {
    label.setAttribute("lengthAdjust", "spacingAndGlyphs");
});
```
